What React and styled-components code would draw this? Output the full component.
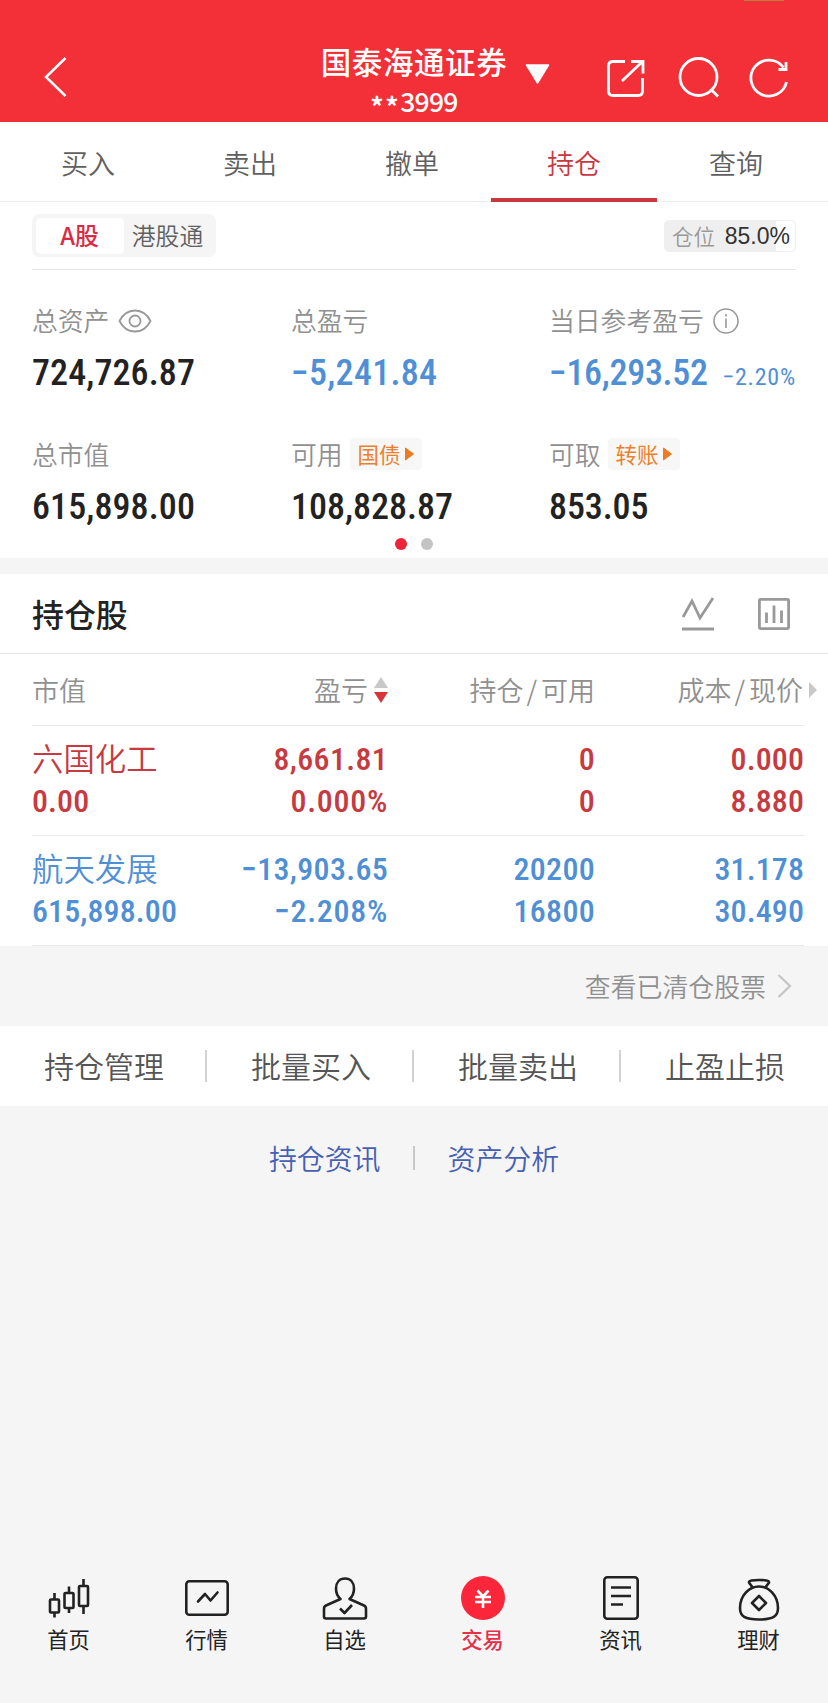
import React from 'react';
import styled, { createGlobalStyle } from 'styled-components';

const GlobalStyle = createGlobalStyle`
    * { box-sizing:border-box; }
    body {
        margin:0;
        background:#f5f5f5;
        font-family:"Noto Sans CJK SC", sans-serif;
        font-weight:350;
        color:#222;
    }
    svg { display:block; flex-shrink:0; }
`

const Screen = styled.div`
    width:828px;
    height:1703px;
    display:flex;
    flex-direction:column;
    overflow:hidden;
    white-space:nowrap;
`

/* ---- header ---- */
const Header = styled.header`
    position:relative;
    height:122px;
    padding:41px 38px 0 44px;
    display:flex;
    background:#f32f38;
    color:#fff;
`
const StatusMark = styled.span`
    position:absolute;
    top:0;
    right:44px;
    width:40px;
    height:1px;
    background:#b5803f;
`
const BackSlot = styled.div`
    width:276px;
    padding-top:15px;
`
const Account = styled.div`
    width:188px;
    display:flex;
    flex-direction:column;
    align-items:center;
`
const Broker = styled.h1`
    margin:0;
    font-size:30.5px;
    line-height:40px;
    font-weight:500;
    letter-spacing:.6px;
`
const AccountNo = styled.div`
    display:flex;
    font-size:26.5px;
    line-height:36px;
    font-weight:500;
    margin-top:2px;
    letter-spacing:-.7px;
`
const Stars = styled.span`
    font-weight:700;
    letter-spacing:1.5px;
    position:relative;
    top:5px;
`
const Caret = styled.div`
    padding:23px 0 0 17px;
    width:56px;
`
const HeaderTools = styled.div`
    display:flex;
    flex:1;
    justify-content:space-between;
    align-items:flex-start;
    padding:15px 0 0 41px;
`

/* ---- tabs ---- */
const Tabs = styled.nav`
    display:flex;
    height:80px;
    padding:0 11px 0 7px;
    background:#fff;
    border-bottom:1px solid #ececec;
`
const Tab = styled.div`
    flex:1;
    min-width:0;
    height:80px;
    display:flex;
    flex-direction:column;
    align-items:center;
    justify-content:space-between;
    padding-top:21px;
    font-size:27px;
    line-height:40px;
    color:${p => p.$active ? '#c93840' : '#606060'};
    &::after {
        content:'';
        width:166px;
        height:4px;
        background:${p => p.$active ? '#c93840' : 'transparent'};
    }
`

/* ---- assets ---- */
const Assets = styled.section`
    height:356px;
    padding:12px 32px 0;
    background:#fff;
`
const MarketBar = styled.div`
    display:flex;
    justify-content:space-between;
    height:56px;
    border-bottom:1px solid #e6e6e6;
`
const Segment = styled.div`
    display:flex;
    width:184px;
    height:43px;
    padding:4px;
    border-radius:7px;
    background:#f5f5f5;
`
const SegmentItem = styled.div`
    width:88px;
    height:36px;
    padding-right:1px;
    border-radius:5px;
    text-align:center;
    font-size:23.8px;
    line-height:34px;
    font-weight:${p => p.$active ? 500 : 350};
    color:${p => p.$active ? '#dc2a44' : '#606060'};
    background:${p => p.$active ? '#fff' : 'transparent'};
`
const Position = styled.div`
    display:flex;
    align-items:center;
    justify-content:space-between;
    width:132px;
    height:32px;
    margin-top:6px;
    padding:0 5px 0 7px;
    border:1px solid #efefef;
    border-radius:5px;
    background:linear-gradient(to right, #efefef 85%, #fff 85%);
    font-size:21.5px;
    line-height:28px;
    color:#999;
    b {
        font:400 23px/30px "Liberation Sans", sans-serif;
        color:#333;
    }
`
const StatGrid = styled.div`
    display:grid;
    grid-template-columns:259px 258px 247px;
    grid-auto-rows:134px;
    padding-top:32px;
`
const StatLabel = styled.div`
    display:flex;
    align-items:center;
    height:36px;
    font-size:25.8px;
    line-height:34px;
    color:#909090;
    svg { margin:1px 0 0 9px; }
`
const StatLine = styled.div`
    display:flex;
    align-items:baseline;
    justify-content:space-between;
    margin-top:15px;
`
const Num = styled.span`
    font-family:"Roboto Condensed", Roboto, sans-serif;
    font-size:${p => p.$size || 32}px;
    line-height:40px;
    font-weight:${p => p.$weight || 500};
    letter-spacing:${p => p.$spacing || '.1px'};
    color:${p => p.$color || 'inherit'};
`
const Chip = styled.span`
    display:flex;
    align-items:center;
    width:72px;
    height:32px;
    margin-left:7px;
    padding-left:8px;
    border-radius:4px;
    background:#f7f7f7;
    font-size:21.5px;
    line-height:28px;
    font-weight:400;
    color:#ee7f2d;
    svg { margin:0 0 0 4px; }
`
const Dots = styled.div`
    display:flex;
    justify-content:center;
    gap:14px;
    margin-top:-32px;
`
const Dot = styled.i`
    width:12px;
    height:12px;
    border-radius:50%;
    background:${p => p.$active ? '#ee2238' : '#c4c4c4'};
`

/* ---- holdings ---- */
const Holdings = styled.section`
    margin-top:16px;
    background:#fff;
`
const HoldingsTitle = styled.div`
    display:flex;
    align-items:center;
    height:80px;
    padding:0 38px 0 32px;
    border-bottom:1px solid #e6e6e6;
    h2 {
        flex:1;
        margin:-1px 0 0;
        font-size:31.9px;
        line-height:44px;
        font-weight:500;
    }
    svg + svg { margin-left:44px; }
`
const Table = styled.div`
    padding:0 24px 0 32px;
`
const Row = styled.div`
    display:grid;
    grid-template-columns:150px 206px 207px 209px;
    height:${p => p.$head ? 72 : 110}px;
    align-items:center;
    border-bottom:1px solid #e9e9e9;
    color:${p => p.$color || '#909090'};
    font-size:27px;
`
const HeadCell = styled.div`
    display:flex;
    justify-content:${p => p.$left ? 'flex-start' : 'flex-end'};
    align-items:center;
    line-height:40px;
    em {
        font-style:normal;
        margin:0 4px 0 3px;
    }
    svg { margin-left:6px; }
`
const OverArrow = styled.svg`
    margin-right:-13px;
`
const Cell = styled.div`
    display:flex;
    flex-direction:column;
    align-items:${p => p.$left ? 'flex-start' : 'flex-end'};
    margin-top:-2px;
    > span { line-height:42px; }
`
const StockName = styled.span`
    font-size:31.4px;
    margin-top:-1px;
    margin-bottom:1px;
`

/* ---- links below the table ---- */
const Cleared = styled.div`
    display:flex;
    justify-content:flex-end;
    align-items:center;
    height:80px;
    padding-right:36px;
    font-size:25.9px;
    line-height:40px;
    color:#909090;
    svg { margin-left:11px; }
`
const Actions = styled.div`
    display:flex;
    height:80px;
    align-items:center;
    background:#fff;
`
const Action = styled.div`
    width:207px;
    height:32px;
    padding-left:3px;
    text-align:center;
    font-size:30px;
    line-height:30px;
    color:#555;
    border-right:2px solid #d2d2d2;
    &:last-child { border-color:transparent; }
`
const Links = styled.div`
    display:flex;
    justify-content:center;
    align-items:center;
    height:103px;
    font-size:27.9px;
    line-height:40px;
    color:#4560b4;
    i {
        width:2px;
        height:24px;
        margin:0 32.5px;
        background:#c8c8c8;
    }
`

/* ---- bottom bar ---- */
const TabBar = styled.footer`
    display:flex;
    margin-top:auto;
    height:127px;
`
const TabBarItem = styled.div`
    flex:1;
    display:flex;
    flex-direction:column;
    align-items:center;
    font-size:21.3px;
    line-height:30px;
    font-weight:${p => p.$active ? 500 : 400};
    color:${p => p.$active ? '#e5304a' : '#222'};
    svg { margin-bottom:2px; }
    span { margin-right:1px; }
`

const RED = '#c63a40';
const BLUE = '#4f8fd6';

const rows = [
    { name: '六国化工', value: '0.00', pl: '8,661.81', rate: '0.000%', hold: '0', free: '0', cost: '0.000', price: '8.880', color: RED },
    { name: '航天发展', value: '615,898.00', pl: '−13,903.65', rate: '−2.208%', hold: '20200', free: '16800', cost: '31.178', price: '30.490', color: BLUE },
];

const Play = () => (
    <svg width="9" height="14" viewBox="0 0 9 14"><path d="M0.500 1 8.500 7 0.500 13z" fill="#f07a22" stroke="#f07a22" strokeLinejoin="round" /></svg>
)

const tabItems = [
    {
        label: '首页',
        icon: (
            <g>
                <rect x="3" y="23.500" width="9" height="13" rx="1" /><path d="M7.500 17v6M7.500 37v4.500" />
                <rect x="17.500" y="17" width="9" height="15" rx="1" /><path d="M22 10.500v6M22 32v5" />
                <rect x="32" y="10" width="9" height="20" rx="1" /><path d="M36.500 3v7M36.500 30v8" />
            </g>
        ),
    },
    {
        label: '行情',
        icon: (
            <g>
                <rect x="1.300" y="5.300" width="41.400" height="33.400" rx="3" />
                <path d="M13 25.500 20 18l5.500 6.500 7-8" strokeLinecap="round" />
            </g>
        ),
    },
    {
        label: '自选',
        icon: (
            <g>
                <path d="M17.500 23c-3-2.500-4.500-5.500-4.500-10.500 0-6 3.500-10 9-10s9 4 9 10c0 5-1.500 8-4.500 10.500l14.500 6.500c1.500.7 2 1.800 2 3.500v7.500c0 1.300-.7 2-2 2h-38c-1.300 0-2-.7-2-2V33c0-1.700.5-2.800 2-3.500z" />
                <path d="M17 32.500l4.500 4.500 7.500-8" />
            </g>
        ),
    },
    {
        label: '交易',
        active: true,
        icon: (
            <g>
                <circle cx="22" cy="22" r="22" fill="#fb2639" stroke="none" />
                <path d="M16.500 14.500l5.500 6 5.500-6M14 21h16M14 26h16M22 20.500V32" stroke="#fff" />
            </g>
        ),
    },
    {
        label: '资讯',
        icon: (
            <g>
                <rect x="5.300" y="1.300" width="33.400" height="41.400" rx="3" />
                <path d="M12 11.500h20M12 20h20M12 28.500h12" />
            </g>
        ),
    },
    {
        label: '理财',
        icon: (
            <g>
                <path d="M15.500 12c-.5-2.500-3-4-3.500-5.500C11.500 4.500 16 4 22 4s10.500.5 10 2.500c-.5 1.500-3 3-3.500 5.500" />
                <path d="M22 10.500c-10 0-19 9-19 21.500C3 40.500 8 43.500 22 43.500s19-3 19-11.500C41 19.500 32 10.500 22 10.500z" />
                <path d="M22 20l7 7-7 7-7-7z" />
            </g>
        ),
    },
];

const App = () => {
    return (
        <>
            <GlobalStyle />
            <Screen>
                <Header>
                    <StatusMark />
                    <BackSlot>
                        <svg width="23" height="42" viewBox="0 0 23 42" fill="none" stroke="#fff" strokeWidth="2.500"><path d="M21.500 2 2 21l19.500 19" /></svg>
                    </BackSlot>
                    <Account>
                        <Broker>国泰海通证券</Broker>
                        <AccountNo><Stars>**</Stars>3999</AccountNo>
                    </Account>
                    <Caret>
                        <svg width="25" height="20" viewBox="0 0 25 20"><path d="M1.500 1h22L12.500 19z" fill="#fff" stroke="#fff" strokeLinejoin="round" strokeWidth="1.500" /></svg>
                    </Caret>
                    <HeaderTools>
                        <svg width="40" height="42" viewBox="0 0 40 42" fill="none" stroke="#fff" strokeWidth="2.800">
                            <path d="M20 5.500H8C5 5.500 3.500 7 3.500 10v25c0 3 1.500 4.500 4.500 4.500h25c3 0 4.500-1.500 4.500-4.500V22M17 25 37 6M26 5.500h12v12" />
                        </svg>
                        <svg width="42" height="42" viewBox="-1.500 0 42 42" fill="none" stroke="#fff" strokeWidth="2.800" overflow="visible">
                            <circle cx="21" cy="21" r="18.500" /><path d="M33 33l7.500 7.500" />
                        </svg>
                        <svg width="42" height="42" viewBox="0 0 42 42" fill="none" stroke="#fff" strokeWidth="2.800">
                            <path d="M38.500 26A18 18 0 1 1 35.500 11.500" /><path d="M38 6v7.500h-7.500" />
                        </svg>
                    </HeaderTools>
                </Header>

                <Tabs>
                    <Tab>买入</Tab>
                    <Tab>卖出</Tab>
                    <Tab>撤单</Tab>
                    <Tab $active>持仓</Tab>
                    <Tab>查询</Tab>
                </Tabs>

                <Assets>
                    <MarketBar>
                        <Segment>
                            <SegmentItem $active>A股</SegmentItem>
                            <SegmentItem>港股通</SegmentItem>
                        </Segment>
                        <Position>仓位<b>85.0%</b></Position>
                    </MarketBar>
                    <StatGrid>
                        <div>
                            <StatLabel>
                                总资产
                                <svg width="34" height="24" viewBox="0 0 34 24" fill="none" stroke="#999" strokeWidth="1.800">
                                    <path d="M1.500 12C5 5 10.500 1.500 17 1.500S29 5 32.500 12C29 19 23.500 22.500 17 22.500S5 19 1.500 12z" /><circle cx="17" cy="12" r="5.500" />
                                </svg>
                            </StatLabel>
                            <StatLine><Num $size={36}>724,726.87</Num></StatLine>
                        </div>
                        <div>
                            <StatLabel>总盈亏</StatLabel>
                            <StatLine><Num $size={36} $spacing=".3px" $color={BLUE}>−5,241.84</Num></StatLine>
                        </div>
                        <div>
                            <StatLabel>
                                当日参考盈亏
                                <svg width="26" height="26" viewBox="0 0 26 26" fill="none" stroke="#999" strokeWidth="1.600">
                                    <circle cx="13" cy="13" r="12" /><path d="M13 10.500V20M13 6v2.500" />
                                </svg>
                            </StatLabel>
                            <StatLine>
                                <Num $size={36} $spacing="-.3px" $color={BLUE}>−16,293.52</Num>
                                <Num $size={24} $weight={400} $spacing=".8px" $color={BLUE}>−2.20%</Num>
                            </StatLine>
                        </div>
                        <div>
                            <StatLabel>总市值</StatLabel>
                            <StatLine><Num $size={36}>615,898.00</Num></StatLine>
                        </div>
                        <div>
                            <StatLabel>可用<Chip>国债<Play /></Chip></StatLabel>
                            <StatLine><Num $size={36} $spacing="0">108,828.87</Num></StatLine>
                        </div>
                        <div>
                            <StatLabel>可取<Chip>转账<Play /></Chip></StatLabel>
                            <StatLine><Num $size={36} $spacing="-.1px">853.05</Num></StatLine>
                        </div>
                    </StatGrid>
                    <Dots>
                        <Dot $active />
                        <Dot />
                    </Dots>
                </Assets>

                <Holdings>
                    <HoldingsTitle>
                        <h2>持仓股</h2>
                        <svg width="32" height="34" viewBox="0 0 32 34" fill="none" stroke="#999" strokeWidth="2.800">
                            <path d="M1 20 10 4l8 17L31 1M0 32h32" />
                        </svg>
                        <svg width="32" height="32" viewBox="0 0 32 32" fill="none" stroke="#999" strokeWidth="2.800">
                            <rect x="1.400" y="1.400" width="29.200" height="29.200" rx="1" /><path d="M8.500 14.500V25M16 7.500V25M23.500 12.500V25" />
                        </svg>
                    </HoldingsTitle>
                    <Table>
                        <Row $head>
                            <HeadCell $left>市值</HeadCell>
                            <HeadCell>
                                盈亏
                                <svg width="14" height="26" viewBox="0 0 14 26"><path d="M0 11 7 0l7 11z" fill="#c8c8c8" /><path d="M0 15h14L7 26z" fill="#d8353a" /></svg>
                            </HeadCell>
                            <HeadCell>持仓<em>/</em>可用</HeadCell>
                            <HeadCell>
                                成本<em>/</em>现价
                                <OverArrow width="8" height="16" viewBox="0 0 8 16"><path d="M0 0l8 8-8 8z" fill="#c8c8c8" /></OverArrow>
                            </HeadCell>
                        </Row>
                        {rows.map(r => (
                            <Row key={r.name} $color={r.color}>
                                <Cell $left><StockName>{r.name}</StockName><Num>{r.value}</Num></Cell>
                                <Cell><Num $spacing=".3px">{r.pl}</Num><Num $spacing=".7px">{r.rate}</Num></Cell>
                                <Cell><Num $spacing=".3px">{r.hold}</Num><Num $spacing=".3px">{r.free}</Num></Cell>
                                <Cell><Num>{r.cost}</Num><Num>{r.price}</Num></Cell>
                            </Row>
                        ))}
                    </Table>
                </Holdings>

                <Cleared>
                    查看已清仓股票
                    <svg width="15" height="24" viewBox="0 0 15 24" fill="none" stroke="#c4c4c4" strokeWidth="2.200"><path d="M1.500 1 13 12 1.500 23" /></svg>
                </Cleared>
                <Actions>
                    <Action>持仓管理</Action>
                    <Action>批量买入</Action>
                    <Action>批量卖出</Action>
                    <Action>止盈止损</Action>
                </Actions>
                <Links>持仓资讯<i />资产分析</Links>

                <TabBar>
                    {tabItems.map(t => (
                        <TabBarItem key={t.label} $active={t.active}>
                            <svg width="44" height="46" viewBox="0 0 44 46" fill="none" stroke="#222" strokeWidth="2.600" strokeLinejoin="round" overflow="visible">
                                {t.icon}
                            </svg>
                            <span>{t.label}</span>
                        </TabBarItem>
                    ))}
                </TabBar>
            </Screen>
        </>
    )
}

export default App;
